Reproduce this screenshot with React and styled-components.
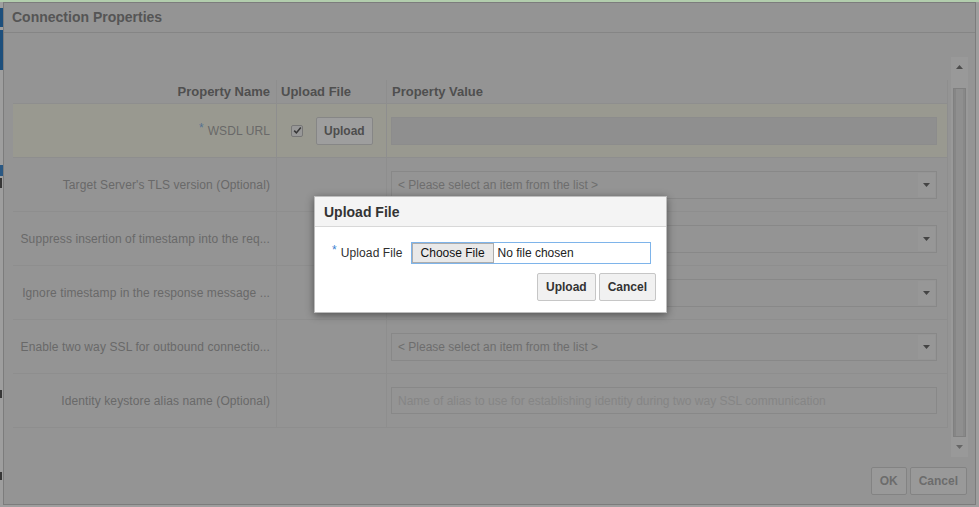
import React from "react";
import styled, { createGlobalStyle } from "styled-components";

const GlobalStyle = createGlobalStyle`
  html, body { margin: 0; padding: 0; }
  body {
    font-family: "Liberation Sans", Arial, Helvetica, sans-serif;
    overflow: hidden;
    background: #f0f0f0;
  }
  * { box-sizing: border-box; }
`;

const Page = styled.div`
  position: relative;
  width: 979px;
  height: 507px;
  background: #f0f0f0;
  border-top: 2px solid #b2cdad;
  display: flex;
  align-items: flex-start;
  overflow: hidden;
`;

const SideStrip = styled.div`
  width: 3px;
  flex: none;
  align-self: stretch;
  display: flex;
  flex-direction: column;
`;

const StripMark = styled.div`
  flex: none;
  width: ${(p) => p.$w || 3}px;
  height: ${(p) => p.$h}px;
  margin-top: ${(p) => p.$gap}px;
  background: ${(p) => p.$c};
`;

const Dialog = styled.section`
  width: 973px;
  height: 503px;
  flex: none;
  background: #dedede;
  border: 1px solid #b2b2b2;
  display: flex;
  flex-direction: column;
`;

const DialogTitleBar = styled.header`
  height: 30px;
  flex: none;
  border-bottom: 1px solid #c3c3c3;
  display: flex;
  align-items: center;
  padding: 0 0 1px 8px;
  font-size: 14px;
  font-weight: bold;
  color: #6a6a6a;
`;

const DialogBody = styled.div`
  flex: 1;
  display: flex;
  flex-direction: column;
  padding: 24px 7px 0 9px;
`;

const ScrollBox = styled.div`
  height: 400px;
  flex: none;
  display: flex;
`;

const ScrollContent = styled.div`
  flex: 1;
  padding: 23px 3px 0 0;
  overflow: hidden;
`;

const Table = styled.div`
  border-right: 1px solid #d3d3d3;
`;

const TableRow = styled.div`
  display: grid;
  grid-template-columns: 263px 110px 1fr;
  height: ${(p) => (p.$head ? 24 : 54)}px;
  border-bottom: 1px solid #d3d3d3;
  background: ${(p) => (p.$highlight ? "#e8e8d6" : "transparent")};
`;

const Cell = styled.div`
  display: flex;
  align-items: center;
  min-width: 0;
  border-left: ${(p) => (p.$divider ? "1px solid #d3d3d3" : "none")};
  justify-content: ${(p) => (p.$right ? "flex-end" : "flex-start")};
  padding: ${(p) => p.$pad || "0"};
  gap: ${(p) => p.$gap || 0}px;
`;

const HeaderText = styled.span`
  font-size: 13px;
  font-weight: bold;
  color: #5e5e5e;
  white-space: nowrap;
`;

const LabelText = styled.span`
  font-size: 12px;
  color: #8e8e8e;
  white-space: nowrap;
  letter-spacing: 0.1px;
`;

const Required = styled.span`
  color: ${(p) => p.$c || "#3d7fd0"};
  font-size: 12px;
  margin-right: 4px;
  position: relative;
  top: -3px;
`;

const CheckBox = styled.span`
  width: 12px;
  height: 12px;
  flex: none;
  border: 1px solid #a8a8a8;
  background: #e6e6e6;
  border-radius: 2px;
  display: flex;
  align-items: center;
  justify-content: center;
`;

const RowButton = styled.button`
  height: 28px;
  padding: 0 7px;
  border: 1px solid #c4c4c4;
  background: #f0f0f0;
  border-radius: 2px;
  font-family: inherit;
  font-size: 12px;
  font-weight: bold;
  color: #5c5c5c;
`;

const ReadonlyField = styled.div`
  flex: 1;
  height: 28px;
  background: #d4d4d4;
  border: 1px solid #d0d0d0;
`;

const SelectBox = styled.div`
  flex: 1;
  height: 28px;
  border: 1px solid #c8c8c8;
  background: #dedede;
  display: flex;
  align-items: center;
  padding-left: 6px;
  font-size: 12px;
  color: #979797;
`;

const SelectText = styled.span`
  flex: 1;
`;

const SelectArrow = styled.span`
  width: 17px;
  align-self: stretch;
  margin: 1px 1px 1px 0;
  background: #e3e3e3;
  display: flex;
  align-items: center;
  justify-content: center;
`;

const TextInput = styled.input`
  flex: 1;
  height: 27px;
  border: 1px solid #c8c8c8;
  background: #dedede;
  padding: 0 0 0 6px;
  font-family: inherit;
  font-size: 12px;
  outline: none;
  &::placeholder {
    color: #c2c2c2;
  }
`;

const ScrollBar = styled.div`
  width: 17px;
  flex: none;
  background: #e8e8e8;
  display: flex;
  flex-direction: column;
  align-items: center;
`;

const ScrollArrow = styled.div`
  height: ${(p) => p.$h}px;
  width: 100%;
  display: flex;
  align-items: center;
  justify-content: center;
`;

const ScrollThumb = styled.div`
  width: 13px;
  height: 349px;
  margin-top: 12px;
  border: 1px solid #bababa;
  background: linear-gradient(
    to right,
    #c4c4c4 0,
    #c4c4c4 2px,
    #d4d4d4 2px,
    #d4d4d4 9px,
    #c8c8c8 9px
  );
`;

const Footer = styled.footer`
  margin-top: 10px;
  display: flex;
  justify-content: flex-end;
  gap: 3px;
  padding-right: 1px;
`;

const FooterButton = styled.button`
  height: 28px;
  padding: 0 8px;
  border: 1px solid #bfbfbf;
  background: #e8e8e8;
  border-radius: 2px;
  font-family: inherit;
  font-size: 12px;
  font-weight: bold;
  color: #959595;
`;

const Overlay = styled.div`
  position: absolute;
  top: -2px;
  left: 0;
  right: 0;
  bottom: 0;
  background: rgba(60, 60, 60, 0.46);
`;

const Modal = styled.div`
  position: absolute;
  left: 314px;
  top: 194px;
  width: 353px;
  background: #ffffff;
  border: 1px solid #bdbdbd;
  box-shadow: 0 2px 8px rgba(0, 0, 0, 0.45);
`;

const ModalHeader = styled.header`
  height: 30px;
  background: #f4f4f4;
  border-bottom: 1px solid #d8d8d8;
  display: flex;
  align-items: center;
  padding-left: 9px;
  font-size: 14px;
  font-weight: bold;
  color: #333333;
`;

const ModalBody = styled.div`
  padding: 15px 10px 11px 17px;
  display: flex;
  flex-direction: column;
`;

const FieldRow = styled.div`
  display: flex;
  align-items: center;
  height: 22px;
  gap: 8px;
`;

const FieldLabel = styled.label`
  font-size: 12px;
  color: #2e2e2e;
  white-space: nowrap;
  letter-spacing: 0.1px;
`;

const FileBox = styled.div`
  width: 240px;
  height: 22px;
  border: 1px solid #7eb4ea;
  display: flex;
  align-items: stretch;
  font-size: 12px;
`;

const ChooseButton = styled.span`
  width: 82px;
  flex: none;
  background: #e9e9e9;
  border: 1px solid #adadad;
  display: flex;
  align-items: center;
  justify-content: center;
  color: #111111;
`;

const FileStatus = styled.span`
  padding-left: 4px;
  display: flex;
  align-items: center;
  color: #222222;
`;

const ModalActions = styled.div`
  margin-top: 9px;
  display: flex;
  justify-content: flex-end;
  gap: 3px;
`;

const ModalButton = styled.button`
  height: 28px;
  padding: 0 8px;
  border: 1px solid #c6c6c6;
  background: #f1f1f1;
  border-radius: 2px;
  font-family: inherit;
  font-size: 12px;
  font-weight: bold;
  color: #333333;
`;

const Triangle = ({ up, color = "#555" }) => (
  <svg width="7" height="4" viewBox="0 0 7 4">
    <path d={up ? "M0 4h7L3.5 0z" : "M0 0h7L3.5 4z"} fill={color} />
  </svg>
);

const Check = () => (
  <svg width="9" height="9" viewBox="0 0 9 9">
    <path d="M1.2 4.6l2.2 2.3L7.8 1.6" fill="none" stroke="#333" strokeWidth="1.6" />
  </svg>
);

const selectRows = [
  { label: "Target Server's TLS version (Optional)", kind: "select" },
  { label: "Suppress insertion of timestamp into the req...", kind: "select" },
  { label: "Ignore timestamp in the response message ...", kind: "select" },
  { label: "Enable two way SSL for outbound connectio...", kind: "select" },
  {
    label: "Identity keystore alias name (Optional)",
    kind: "input",
    placeholder:
      "Name of alias to use for establishing identity during two way SSL communication",
  },
];

export default function App() {
  return (
    <>
      <GlobalStyle />
      <Page>
        <SideStrip>
          <StripMark $gap={6} $h={19} $c="#025eb2" />
          <StripMark $gap={3} $h={40} $c="#025eb2" />
          <StripMark $gap={95} $h={11} $c="#1a6fbe" />
          <StripMark $gap={2} $h={10} $w={2} $c="#333" />
          <StripMark $gap={202} $h={8} $w={2} $c="#333" />
          <StripMark $gap={74} $h={8} $w={2} $c="#333" />
        </SideStrip>

        <Dialog>
          <DialogTitleBar>Connection Properties</DialogTitleBar>
          <DialogBody>
            <ScrollBox>
              <ScrollContent>
                <Table>
                  <TableRow $head>
                    <Cell $right $pad="0 6px 0 7px">
                      <HeaderText>Property Name</HeaderText>
                    </Cell>
                    <Cell $divider $pad="0 0 0 4px">
                      <HeaderText>Upload File</HeaderText>
                    </Cell>
                    <Cell $divider $pad="0 0 0 5px">
                      <HeaderText>Property Value</HeaderText>
                    </Cell>
                  </TableRow>

                  <TableRow $highlight>
                    <Cell $right $pad="0 6px 0 7px">
                      <Required $c="#6b9fd8">*</Required>
                      <LabelText>WSDL URL</LabelText>
                    </Cell>
                    <Cell $divider $pad="0 0 0 14px" $gap={13}>
                      <CheckBox>
                        <Check />
                      </CheckBox>
                      <RowButton>Upload</RowButton>
                    </Cell>
                    <Cell $divider $pad="0 10px 0 4px">
                      <ReadonlyField />
                    </Cell>
                  </TableRow>

                  {selectRows.map((row) => (
                    <TableRow key={row.label}>
                      <Cell $right $pad="0 6px 0 7px">
                        <LabelText>{row.label}</LabelText>
                      </Cell>
                      <Cell $divider />
                      <Cell $divider $pad="0 10px 0 4px">
                        {row.kind === "select" ? (
                          <SelectBox>
                            <SelectText>&lt; Please select an item from the list &gt;</SelectText>
                            <SelectArrow>
                              <Triangle color="#4a4a4a" />
                            </SelectArrow>
                          </SelectBox>
                        ) : (
                          <TextInput placeholder={row.placeholder} readOnly />
                        )}
                      </Cell>
                    </TableRow>
                  ))}
                </Table>
              </ScrollContent>
              <ScrollBar>
                <ScrollArrow $h={19}>
                  <Triangle up color="#5a5a5a" />
                </ScrollArrow>
                <ScrollThumb />
                <ScrollArrow $h={20}>
                  <Triangle color="#8a8a8a" />
                </ScrollArrow>
              </ScrollBar>
            </ScrollBox>
            <Footer>
              <FooterButton>OK</FooterButton>
              <FooterButton>Cancel</FooterButton>
            </Footer>
          </DialogBody>
        </Dialog>

        <SideStrip />

        <Overlay />

        <Modal>
          <ModalHeader>Upload File</ModalHeader>
          <ModalBody>
            <FieldRow>
              <FieldLabel>
                <Required>*</Required>Upload File
              </FieldLabel>
              <FileBox>
                <ChooseButton>Choose File</ChooseButton>
                <FileStatus>No file chosen</FileStatus>
              </FileBox>
            </FieldRow>
            <ModalActions>
              <ModalButton>Upload</ModalButton>
              <ModalButton>Cancel</ModalButton>
            </ModalActions>
          </ModalBody>
        </Modal>
      </Page>
    </>
  );
}
